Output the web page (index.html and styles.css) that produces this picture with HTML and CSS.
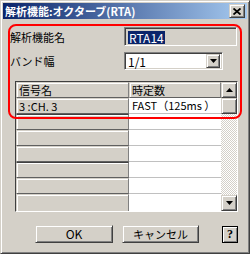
FILE: index.html
```html
<!DOCTYPE html>
<html>
<head>
    <title>解析機能:オクターブ(RTA)</title>
    <meta http-equiv="content-type" content="text/html; charset=UTF-8"/>
    <link rel="stylesheet" href="styles.css">
</head>
<body>
<div class="window">
    <div class="titlebar">
        <span class="title">解析機能:オクターブ(RTA)</span>
        <span class="caption_button">
            <svg width="8" height="7" viewBox="0 0 8 7"><path d="M0.5 0.5 L7.5 6.5 M7.5 0.5 L0.5 6.5" stroke="#000" stroke-width="1.8"/></svg>
        </span>
    </div>
    <div class="content">
        <div class="field_row">
            <label>解析機能名</label>
            <div class="edit"><span class="selected">RTA14</span></div>
        </div>
        <div class="field_row second">
            <label>バンド幅</label>
            <div class="combo">
                <span class="combo_value">1/1</span>
                <span class="combo_button">
                    <svg width="7" height="4" viewBox="0 0 7 4"><polygon points="0,0 7,0 3.5,4" fill="#000"/></svg>
                </span>
            </div>
        </div>
        <div class="grid">
            <div class="cells">
                <div class="fixed">信号名</div><div class="fixed">時定数</div>
                <div class="fixed">3 :CH. 3</div><div class="value">FAST（125ms ）</div>
                <div class="fixed dark"></div><div class="value"></div>
                <div class="fixed"></div><div class="value"></div>
                <div class="fixed"></div><div class="value"></div>
                <div class="fixed dark"></div><div class="value"></div>
                <div class="fixed"></div><div class="value"></div>
                <div class="fixed last"></div><div class="value last"></div>
            </div>
            <div class="vscroll">
                <span class="scroll_button">
                    <svg width="7" height="4" viewBox="0 0 7 4"><polygon points="0,4 7,4 3.5,0" fill="#000"/></svg>
                </span>
                <span class="scroll_thumb"></span>
                <span class="scroll_track"></span>
                <span class="scroll_button">
                    <svg width="7" height="4" viewBox="0 0 7 4"><polygon points="0,0 7,0 3.5,4" fill="#000"/></svg>
                </span>
            </div>
        </div>
        <div class="buttons">
            <button class="button ok">OK</button>
            <button class="button cancel">キャンセル</button>
            <button class="button help">?</button>
        </div>
    </div>
    <div class="annotation"></div>
</div>
</body>
</html>
```

FILE: styles.css
```css
body {
    margin: 0;
    background: #d4d0c8;
    color: #000;
    font: 11px "Noto Sans CJK JP", "Liberation Sans", sans-serif;
}

.window {
    position: relative;
    width: 250px;
    height: 254px;
    box-sizing: border-box;
    padding: 2px;
    background: #d4d0c8;
    border: 1px solid;
    border-color: #d4d0c8 #404040 #404040 #d4d0c8;
    box-shadow: inset 1px 1px #fff, inset -1px -1px #808080;
    display: flex;
    flex-direction: column;
}

.titlebar {
    height: 16px;
    padding: 0 2px;
    display: flex;
    align-items: center;
    justify-content: space-between;
    background: linear-gradient(to right, #0a246a, #a6caf0);
}

.title {
    color: #fff;
    font-weight: bold;
    line-height: 16px;
    white-space: nowrap;
}

/* raised 3D look shared by buttons */
.caption_button, .combo_button, .scroll_button, .scroll_thumb, .button, .fixed {
    box-sizing: border-box;
    background: #d4d0c8;
    border: 1px solid;
    border-color: #d4d0c8 #404040 #404040 #d4d0c8;
    box-shadow: inset 1px 1px #fff, inset -1px -1px #808080;
}

.caption_button {
    width: 16px;
    height: 14px;
    display: flex;
    align-items: center;
    justify-content: center;
}

.content {
    flex: 1;
    display: flex;
    flex-direction: column;
}

.field_row {
    display: grid;
    grid-template-columns: 114px 1fr;
    align-items: center;
    margin: 8px 10px 0 7px;
}

.field_row.second {
    margin-top: 6px;
}

.edit, .combo {
    box-sizing: border-box;
    border: 1px solid;
    border-color: #808080 #fff #fff #808080;
    box-shadow: inset 1px 1px #404040, inset -1px -1px #d4d0c8;
}

.edit {
    height: 19px;
    padding: 2px 0 0 3px;
}

.selected {
    display: inline-block;
    background: #0a246a;
    color: #fff;
    font-size: 12px;
    line-height: 13px;
    padding: 0 1px;
}

.combo {
    width: 99px;
    height: 18px;
    background: #fff;
    display: flex;
    align-items: center;
    justify-content: space-between;
    padding: 0 2px 0 3px;
}

.combo_value {
    font-size: 12px;
}

.combo_button {
    width: 14px;
    height: 14px;
    display: flex;
    align-items: center;
    justify-content: center;
}

.grid {
    height: 131px;
    box-sizing: border-box;
    margin: 11px 9px 0 12px;
    display: flex;
    border: 1px solid;
    border-color: #404040 #fff #fff #404040;
}

.cells {
    flex: 1;
    display: grid;
    grid-template-columns: 113px 1fr;
    grid-template-rows: repeat(7, 16px) 1fr;
    overflow: hidden;
}

.fixed, .value {
    padding-left: 2px;
    line-height: 14px;
    white-space: nowrap;
}

.fixed {
    border-top-color: #d4d0c8;
    border-left-color: #d4d0c8;
    border-right-color: #808080;
    border-bottom-color: #606060;
    box-shadow: inset 1px 1px #fff;
}

.fixed.dark {
    border-top: 1px solid #404040;
    line-height: 13px;
}

.value {
    background: #fff;
    box-sizing: border-box;
    border-bottom: 1px solid #c0c0c0;
    padding-left: 3px;
}

.fixed.last, .value.last {
    border-bottom: 0;
}

.vscroll {
    width: 16px;
    display: flex;
    flex-direction: column;
}

.scroll_button, .scroll_thumb {
    height: 16px;
    flex: none;
    display: flex;
    align-items: center;
    justify-content: center;
}

.scroll_track {
    flex: 1;
    background: repeating-conic-gradient(#d4d0c8 0 25%, #fff 0 50%) 0 0 / 2px 2px;
}

.buttons {
    display: flex;
    align-items: center;
    margin: 13px 0 0 32px;
}

.button {
    height: 18px;
    padding: 0;
    font: inherit;
    color: #000;
    text-align: center;
    line-height: 14px;
}

.ok {
    width: 78px;
    font-size: 12px;
}

.cancel {
    width: 77px;
    margin-left: 9px;
}

.help {
    width: 16px;
    height: 17px;
    margin-left: 23px;
    border-color: #000;
    font-weight: bold;
    font-family: "Liberation Serif", serif;
    font-size: 12px;
}

/* red marker drawn over the dialog */
.annotation {
    position: absolute;
    left: 7px;
    top: 23px;
    width: 234px;
    height: 95px;
    box-sizing: border-box;
    border: 2px solid #f00;
    border-radius: 8px;
    pointer-events: none;
}
```
